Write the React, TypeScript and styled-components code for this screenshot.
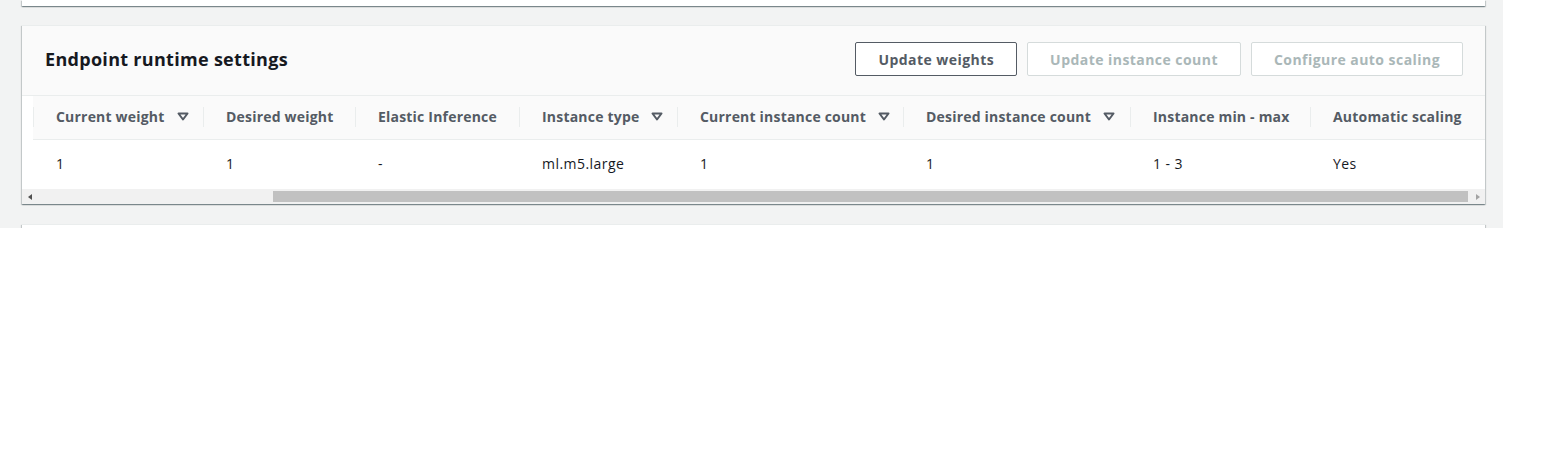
import React from "react";
import styled, { createGlobalStyle } from "styled-components";

const columns = [
  { label: "Current weight", width: 170, sortable: true },
  { label: "Desired weight", width: 152 },
  { label: "Elastic Inference", width: 164 },
  { label: "Instance type", width: 158, sortable: true },
  { label: "Current instance count", width: 226, sortable: true },
  { label: "Desired instance count", width: 227, sortable: true },
  { label: "Instance min - max", width: 180 },
  { label: "Automatic scaling", width: 175 },
];

const rows = [["1", "1", "-", "ml.m5.large", "1", "1", "1 - 3", "Yes"]];

const GlobalStyle = createGlobalStyle`
  html, body {
    margin: 0;
    padding: 0;
    background: #ffffff;
  }
  body {
    font-family: "Open Sans", "Noto Sans", sans-serif;
    -webkit-font-smoothing: antialiased;
  }
  * {
    box-sizing: border-box;
  }
`;

const SortCaret = () => (
  <svg width="12" height="9" viewBox="0 0 12 9" aria-hidden="true">
    <path
      d="M1.5 1.5 H10.5 L6 7.5 Z"
      fill="none"
      stroke="#545b64"
      strokeWidth="2"
      strokeLinejoin="round"
    />
  </svg>
);

export default function App() {
  return (
    <>
      <GlobalStyle />
      <Page>
        <StubCard />
        <Card>
          <Header>
            <Title>Endpoint runtime settings</Title>
            <Actions>
              <Button>Update weights</Button>
              <Button disabled>Update instance count</Button>
              <Button disabled>Configure auto scaling</Button>
            </Actions>
          </Header>
          <TableWrap>
            <Table>
              <colgroup>
                {columns.map((c) => (
                  <col key={c.label} style={{ width: c.width }} />
                ))}
              </colgroup>
              <thead>
                <tr>
                  {columns.map((c) => (
                    <HeadCell key={c.label}>
                      <HeadInner>
                        <span>{c.label}</span>
                        {c.sortable && <SortCaret />}
                      </HeadInner>
                    </HeadCell>
                  ))}
                </tr>
              </thead>
              <tbody>
                {rows.map((r, i) => (
                  <tr key={i}>
                    {r.map((v, j) => (
                      <BodyCell key={j}>{v}</BodyCell>
                    ))}
                  </tr>
                ))}
              </tbody>
            </Table>
          </TableWrap>
          <ScrollBar>
            <ArrowBox>
              <Arrow $dir="left" />
            </ArrowBox>
            <Track>
              <Thumb />
            </Track>
            <ArrowBox>
              <Arrow $dir="right" />
            </ArrowBox>
          </ScrollBar>
        </Card>
        <NextCard />
      </Page>
    </>
  );
}

// Styled Components

const Page = styled.div`
  width: 1503px;
  height: 228px;
  overflow: hidden;
  background: #f2f3f3;
  padding: 0 18px 0 22px;
  display: flex;
  flex-direction: column;
`;

const cardShadow = `
  0 1px 1px 0 rgba(0, 28, 36, 0.3),
  1px 1px 1px 0 rgba(0, 28, 36, 0.15),
  -1px 1px 1px 0 rgba(0, 28, 36, 0.15)
`;

const StubCard = styled.div`
  height: 6px;
  background: #ffffff;
  box-shadow: ${cardShadow};
  flex-shrink: 0;
`;

const Card = styled.section`
  margin-top: 19px;
  background: #ffffff;
  border-top: 1px solid #eaeded;
  box-shadow: ${cardShadow};
  flex-shrink: 0;
`;

const NextCard = styled.div`
  margin-top: 20px;
  height: 40px;
  background: #ffffff;
  border-top: 1px solid #eaeded;
  box-shadow: ${cardShadow};
  flex-shrink: 0;
`;

const Header = styled.div`
  height: 70px;
  background: #fafafa;
  border-bottom: 1px solid #eaeded;
  padding: 0 22px 3px 23px;
  display: flex;
  align-items: center;
  justify-content: space-between;
`;

const Title = styled.h2`
  margin: 0;
  font-size: 18px;
  line-height: 22px;
  font-weight: 700;
  letter-spacing: 0.3px;
  color: #16191f;
`;

const Actions = styled.div`
  display: flex;
  gap: 10px;
`;

const Button = styled.button`
  height: 34px;
  padding: 0 22px;
  border-radius: 2px;
  border: 1px solid ${(p) => (p.disabled ? "#d5dbdb" : "#545b64")};
  background: #ffffff;
  color: ${(p) => (p.disabled ? "#aab7b8" : "#545b64")};
  font-family: inherit;
  font-size: 14px;
  font-weight: 700;
  letter-spacing: 0.45px;
  cursor: ${(p) => (p.disabled ? "default" : "pointer")};
`;

const TableWrap = styled.div`
  overflow: hidden;
  padding-left: 11px;
`;

const Table = styled.table`
  table-layout: fixed;
  border-collapse: collapse;
  width: 1452px;
`;

const HeadCell = styled.th`
  height: 43px;
  padding: 0 0 1px;
  background: #fafafa;
  border-bottom: 1px solid #eaeded;
  text-align: left;
`;

const HeadInner = styled.div`
  height: 20px;
  border-left: 1px solid #eaeded;
  padding-left: 22px;
  display: flex;
  align-items: center;
  gap: 12px;
  font-size: 14px;
  font-weight: 700;
  letter-spacing: 0.2px;
  color: #545b64;
  white-space: nowrap;
`;

const BodyCell = styled.td`
  height: 50px;
  padding: 0 0 1px 23px;
  font-size: 14px;
  letter-spacing: 0.45px;
  color: #16191f;
  white-space: nowrap;
`;

const ScrollBar = styled.div`
  height: 15px;
  background: #f1f1f1;
  display: flex;
`;

const ArrowBox = styled.div`
  width: 15px;
  display: flex;
  align-items: center;
  justify-content: center;
`;

const Arrow = styled.span<{ $dir: "left" | "right" }>`
  width: 0;
  height: 0;
  border-top: 3px solid transparent;
  border-bottom: 3px solid transparent;
  ${(p) =>
    p.$dir === "left"
      ? "border-right: 4px solid #505050;"
      : "border-left: 4px solid #a3a3a3;"}
`;

const Track = styled.div`
  flex: 1;
  display: flex;
  padding: 2px 2px 2px 236px;
`;

const Thumb = styled.div`
  flex: 1;
  background: #c1c1c1;
`;
